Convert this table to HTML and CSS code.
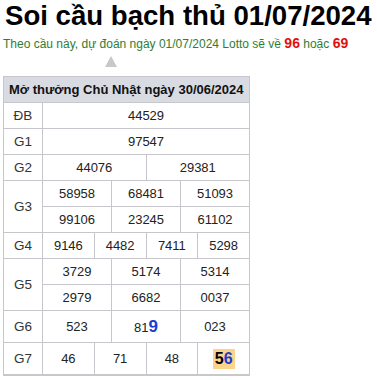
FILE: index.html
```html
<!DOCTYPE html>
<html lang="vi">
<head>
<meta charset="utf-8">
<link rel="stylesheet" href="styles.css">
</head>
<body>
<div class="page">
  <h1 class="title">Soi cầu bạch thủ 01/07/2024</h1>
  <p class="lead">Theo cầu này, dự đoán ngày 01/07/2024 Lotto sẽ về <b class="hot">96</b> hoặc <b class="hot">69</b></p>
  <div class="pointer-row"><span class="pointer"></span></div>
  <table class="result">
    <colgroup>
      <col class="col-label">
      <col><col><col><col><col><col><col><col><col><col><col><col>
    </colgroup>
    <thead>
      <tr><th colspan="13">Mở thưởng Chủ Nhật ngày 30/06/2024</th></tr>
    </thead>
    <tbody>
      <tr><td class="label">ĐB</td><td colspan="12">44529</td></tr>
      <tr><td class="label">G1</td><td colspan="12">97547</td></tr>
      <tr><td class="label">G2</td><td colspan="6">44076</td><td colspan="6">29381</td></tr>
      <tr><td class="label" rowspan="2">G3</td><td colspan="4">58958</td><td colspan="4">68481</td><td colspan="4">51093</td></tr>
      <tr><td colspan="4">99106</td><td colspan="4">23245</td><td colspan="4">61102</td></tr>
      <tr><td class="label">G4</td><td colspan="3">9146</td><td colspan="3">4482</td><td colspan="3">7411</td><td colspan="3">5298</td></tr>
      <tr><td class="label" rowspan="2">G5</td><td colspan="4">3729</td><td colspan="4">5174</td><td colspan="4">5314</td></tr>
      <tr><td colspan="4">2979</td><td colspan="4">6682</td><td colspan="4">0037</td></tr>
      <tr class="tall"><td class="label">G6</td><td colspan="4">523</td><td colspan="4">81<b class="mark">9</b></td><td colspan="4">023</td></tr>
      <tr class="tall"><td class="label">G7</td><td colspan="3">46</td><td colspan="3">71</td><td colspan="3">48</td><td colspan="3"><span class="hit"><b>5</b><b class="mark">6</b></span></td></tr>
    </tbody>
  </table>
</div>
</body>
</html>
```

FILE: styles.css
```css
html, body {
  margin: 0;
  padding: 0;
  background: #fff;
}

.page {
  padding: 0 3px;
  font-family: "Liberation Sans", Arial, sans-serif;
}

.title {
  margin: 0 0 0 2px;
  font-size: 27.6px;
  line-height: 32px;
  font-weight: bold;
  color: #000;
  white-space: nowrap;
}

.lead {
  margin: 0;
  height: 22px;
  line-height: 22px;
  font-size: 12px;
  color: #2e7d32;
  white-space: nowrap;
}

.hot {
  color: #e01010;
  font-size: 14px;
}

.pointer-row {
  height: 22px;
  padding-top: 2px;
  box-sizing: border-box;
}

.pointer {
  display: block;
  margin-left: 102px;
  width: 0;
  height: 0;
  border-left: 6.5px solid transparent;
  border-right: 6.5px solid transparent;
  border-bottom: 11px solid #c8c8c8;
}

.result {
  width: 247px;
  border-collapse: collapse;
  table-layout: fixed;
  border-bottom: 2px solid #c8c8cc;
}

.col-label {
  width: 39px;
}

.result th,
.result td {
  border: 1px solid #c6c6cc;
  text-align: center;
  padding: 0;
  height: 25px;
  font-size: 13px;
  color: #222;
  white-space: nowrap;
}

.result th {
  background: #d9dbe3;
  font-weight: bold;
  color: #111;
  text-align: left;
  padding-left: 5px;
  font-size: 13px;
}

.result td.label {
  color: #333;
  font-size: 13.5px;
}

.result tr.tall td {
  height: 31px;
}

.mark {
  color: #1a3fd0;
  font-size: 17px;
}

.hit {
  display: inline-block;
  background: #fcd38a;
  padding: 0 2px;
  line-height: 20px;
  font-size: 16px;
  color: #000;
}

.hit .mark {
  font-size: 16px;
}
```
